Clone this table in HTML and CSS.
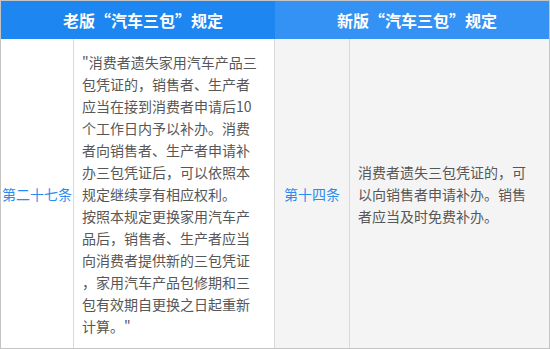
FILE: index.html
```html
<!DOCTYPE html>
<html lang="zh-CN">
<head>
<meta charset="utf-8">
<link rel="stylesheet" href="styles.css">
</head>
<body>
<div class="table">
  <div class="head head-old"><span>老版“汽车三包”规定</span></div>
  <div class="head head-new"><span>新版“汽车三包”规定</span></div>

  <div class="cell art old">第二十七条</div>
  <div class="cell text old">
    <p>"消费者遗失家用汽车产品三<br>包凭证的，销售者、生产者<br>应当在接到消费者申请后10<br>个工作日内予以补办。消费<br>者向销售者、生产者申请补<br>办三包凭证后，可以依照本<br>规定继续享有相应权利。</p>
    <p>按照本规定更换家用汽车产<br>品后，销售者、生产者应当<br>向消费者提供新的三包凭证<br>，家用汽车产品包修期和三<br>包有效期自更换之日起重新<br>计算。"</p>
  </div>

  <div class="cell art new">第十四条</div>
  <div class="cell text new last">
    <p>消费者遗失三包凭证的，可<br>以向销售者申请补办。销售<br>者应当及时免费补办。</p>
  </div>
</div>
</body>
</html>
```

FILE: styles.css
```css
* {
  box-sizing: border-box;
}

html, body {
  margin: 0;
  padding: 0;
  background: #ffffff;
}

.table {
  width: 550px;
  height: 349px;
  border: 1px solid #c4c4c4;
  display: grid;
  grid-template-columns: 73px 201px 75px 199px;
  grid-template-rows: 38px 1fr;
  font-family: "Noto Sans CJK SC", "Noto Sans", sans-serif;
}

.head {
  grid-row: 1;
  display: flex;
  align-items: center;
  justify-content: center;
  color: #ffffff;
  font-size: 16px;
  font-weight: bold;
  padding-left: 10px;
  letter-spacing: 0;
}

.head-old {
  grid-column: 1 / 3;
  background: #1e86f0;
}

.head-new {
  grid-column: 3 / 5;
  background: #3592f5;
}

.cell {
  grid-row: 2;
  display: flex;
  flex-direction: column;
  justify-content: center;
  border-right: 1px solid #dadada;
  font-size: 14px;
  line-height: 22px;
}

.cell.last {
  border-right: none;
}

.old {
  background: #ffffff;
}

.new {
  background: #f4f4f4;
}

.art {
  color: #2b8cf0;
  align-items: center;
  white-space: nowrap;
  overflow: visible;
}

.text {
  color: #575757;
  padding: 0 6px 0 8px;
  white-space: nowrap;
}

.text p {
  margin: 0;
}
```
